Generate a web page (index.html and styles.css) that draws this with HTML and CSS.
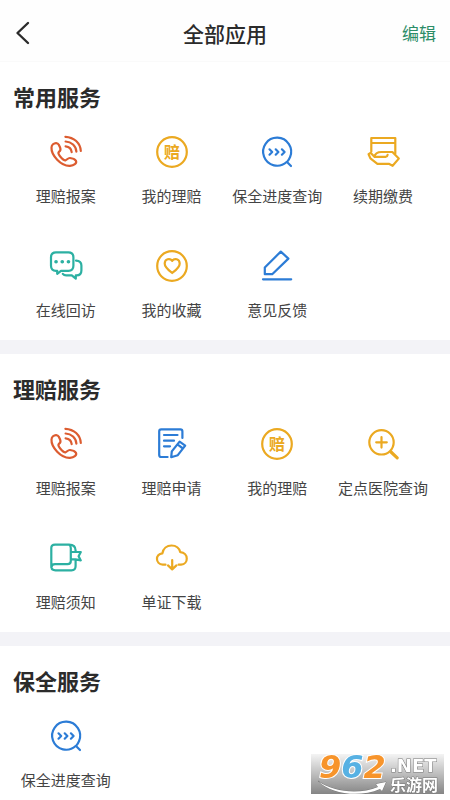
FILE: index.html
```html
<!DOCTYPE html>
<html lang="zh-CN">
<head>
<meta charset="utf-8">
<meta name="viewport" content="width=device-width, initial-scale=1">
<title>全部应用</title>
<link rel="stylesheet" href="styles.css">
</head>
<body>
<svg class="sprite" aria-hidden="true">
  <symbol id="phone" viewBox="0 0 36 36">
    <path d="M5 10.3C7 8.5 9.6 8.6 10.8 10.8L12.2 13.8C13 15.8 12.2 16.9 10.9 17.9C9.8 19 10.6 20.5 12 22.2C14 24.6 15.8 26.6 17.5 26.3C19 26 19.8 23.8 22 24C24 24.2 27 25.3 28 26.8C29 29.2 26 31.4 22 31.8C13 32.3 3 21 3.5 13.5C3.6 12 4 11.2 5 10.3Z"/>
    <path d="M17.4 2.8C26 3.2 32.4 9 32.8 17M17.6 7.5C23.5 7.8 28 12 28.4 17.6M17.6 12.3C21 12.6 23.4 15 23.7 18.2"/>
  </symbol>
  <symbol id="progress" viewBox="0 0 36 36">
    <path d="M27.6 28A14 14 0 1 1 31 23.2Q30 26 28 28L32 32"/>
    <path d="M10.5 15.3L13.2 18L10.5 20.7M16.7 15.3L19.4 18L16.7 20.7M22.9 15.3L25.6 18L22.9 20.7"/>
  </symbol>
  <symbol id="pay" viewBox="0 0 36 36">
    <path d="M6.3 17.5V4H30.3V19.5M6.3 9H30.3"/>
    <path d="M9.4 22.8L5.6 18.8L3.6 20.2L5.4 24.4L12.4 29.8H23.8L27.6 31.8L33.8 24.6L27.4 18H16.5C12.5 18 10 19.5 9.4 22.8H20.5Q22.4 22.6 22.6 20.8"/>
  </symbol>
  <symbol id="chat" viewBox="0 0 36 36">
    <path d="M8 4.3H20.4Q25.4 4.3 25.4 9.3V17.8Q25.4 22.8 20.4 22.8H13L9.2 25.8V22.8H8Q3 22.8 3 17.8V9.3Q3 4.3 8 4.3Z"/>
    <path d="M28 12.6Q33.4 12.8 33.4 17.6V22.4Q33.4 27.2 28.5 27.4H27.8V30.7L23.8 27.4H18.2Q16 27.4 14.8 25.8"/>
    <path class="dots" d="M8 13.7H8.1M14.2 13.7H14.3M20.4 13.7H20.5"/>
  </symbol>
  <symbol id="heart" viewBox="0 0 36 36">
    <circle cx="18" cy="18" r="14.8"/>
    <path d="M18.2 12.8C16 9.8 10.8 10.7 10.7 15.5C10.6 19.4 15 22.5 18.2 25C21.4 22.5 25.8 19.4 25.7 15.5C25.6 10.7 20.4 9.8 18.2 12.8Z"/>
  </symbol>
  <symbol id="pen" viewBox="0 0 36 36">
    <path d="M21.8 3.6L29.4 10.6L13.2 26.2H5.8V19.5ZM4 31.3H32.2"/>
  </symbol>
  <symbol id="form" viewBox="0 0 36 36">
    <path d="M13.6 31H7.2Q5.2 31 5.2 29V5.4Q5.2 3.4 7.2 3.4H26.4Q28.4 3.4 28.4 5.4V12M10 9H23.5M10 14.7H20M10 20.3H16"/>
    <path d="M25.6 15.6L31.2 19.6L23.8 29.2L17.2 31.2L17.8 25.4ZM23.5 18.4L28.9 22.5"/>
  </symbol>
  <symbol id="hospital" viewBox="0 0 36 36">
    <circle cx="16.5" cy="16.3" r="12.2"/>
    <path d="M16.5 11V21.6M11.2 16.3H21.8"/>
    <path class="handle" d="M26 26L32.2 31.8"/>
  </symbol>
  <symbol id="book" viewBox="0 0 36 36">
    <path d="M7 4.6H21Q27.6 4.6 27.6 10.5V12M27.6 19.5V26Q27.6 30.3 23.5 30.3H7.5Q3.3 30.3 3.3 26.5V8Q3.3 4.6 7 4.6M3.3 27.5Q3.8 24.2 7 24.2H19.5Q22.8 24.2 22.8 21V8Q22.8 5.6 21 4.6M22.8 12H32.8L30.6 16.2L32.8 20.4L27.6 19.4H22.8"/>
  </symbol>
  <symbol id="cloud" viewBox="0 0 36 36">
    <path d="M11.5 24.7H8.8C1.2 24.2 1 14 8.4 13.3C9.2 8.3 13 5.5 17.5 5.5C22 5.5 25.2 8 26.3 12.2C34.8 12.8 34.8 24 27 24.7H24.6M18.2 20V29.2M14 25.4L18.2 29.4L22.4 25.4"/>
  </symbol>
</svg>

<header class="topbar">
  <button class="back" type="button" aria-label="返回">
    <svg viewBox="0 0 24 24"><path d="M14 2L3.5 12L14 22"/></svg>
  </button>
  <h1 class="page-title">全部应用</h1>
  <button class="edit" type="button">编辑</button>
</header>

<main>
  <section class="group">
    <h2 class="group-title">常用服务</h2>
    <nav class="grid">
      <a class="app red" href="#"><svg class="icon"><use href="#phone"/></svg><span>理赔报案</span></a>
      <a class="app amber" href="#"><svg class="icon" viewBox="0 0 36 36"><circle cx="18" cy="18" r="14.8"/><text class="coin-char" x="18" y="24" text-anchor="middle">赔</text></svg><span>我的理赔</span></a>
      <a class="app blue" href="#"><svg class="icon"><use href="#progress"/></svg><span>保全进度查询</span></a>
      <a class="app amber" href="#"><svg class="icon"><use href="#pay"/></svg><span>续期缴费</span></a>
      <a class="app teal" href="#"><svg class="icon"><use href="#chat"/></svg><span>在线回访</span></a>
      <a class="app amber" href="#"><svg class="icon"><use href="#heart"/></svg><span>我的收藏</span></a>
      <a class="app blue" href="#"><svg class="icon"><use href="#pen"/></svg><span>意见反馈</span></a>
    </nav>
  </section>
  <section class="group">
    <h2 class="group-title">理赔服务</h2>
    <nav class="grid">
      <a class="app red" href="#"><svg class="icon"><use href="#phone"/></svg><span>理赔报案</span></a>
      <a class="app blue" href="#"><svg class="icon"><use href="#form"/></svg><span>理赔申请</span></a>
      <a class="app amber" href="#"><svg class="icon" viewBox="0 0 36 36"><circle cx="18" cy="18" r="14.8"/><text class="coin-char" x="18" y="24" text-anchor="middle">赔</text></svg><span>我的理赔</span></a>
      <a class="app amber" href="#"><svg class="icon"><use href="#hospital"/></svg><span>定点医院查询</span></a>
      <a class="app teal" href="#"><svg class="icon"><use href="#book"/></svg><span>理赔须知</span></a>
      <a class="app amber" href="#"><svg class="icon"><use href="#cloud"/></svg><span>单证下载</span></a>
    </nav>
  </section>
  <section class="group">
    <h2 class="group-title">保全服务</h2>
    <nav class="grid">
      <a class="app blue" href="#"><svg class="icon"><use href="#progress"/></svg><span>保全进度查询</span></a>
    </nav>
  </section>
</main>

<aside class="watermark">
  <svg class="swoosh" viewBox="0 0 133 40" aria-hidden="true">
    <path d="M7 27C22 38 48 41 67 33L65 30L75 28L71 37L69 35C48 44 20 40 7 27Z"/>
  </svg>
  <div class="digits"><span class="orange">9</span><span class="sky">6</span><span class="orange">2</span></div>
  <div class="site">
    <span class="net">.NET</span>
    <span class="name">乐游网</span>
  </div>
</aside>
</body>
</html>
```
FILE: styles.css
```css
* {
  box-sizing: border-box;
}

body {
  margin: 0;
  background: #fff;
  color: #2b2b2b;
  font-family: "Noto Sans CJK SC", sans-serif;
}

.sprite {
  position: absolute;
  width: 0;
  height: 0;
}

.topbar {
  display: grid;
  grid-template-columns: 1fr auto 1fr;
  align-items: center;
  height: 62px;
  padding: 4px 14px 0;
  background: #fefefe;
  border-bottom: 1px solid #fafafa;
}

button {
  padding: 0;
  border: 0;
  background: none;
  font: inherit;
  cursor: pointer;
}

.back {
  justify-self: start;
  width: 24px;
  height: 24px;
}

.back svg {
  display: block;
  fill: none;
  stroke: #2b2b2b;
  stroke-width: 2.4;
  stroke-linecap: round;
  stroke-linejoin: round;
}

.page-title {
  margin: 0;
  font-size: 21px;
  line-height: 32px;
  font-weight: 500;
}

.edit {
  justify-self: end;
  color: #2c8d68;
  font-size: 17px;
  line-height: 24px;
}

.group {
  padding: 18px 14px 20px 13px;
}

.group + .group {
  border-top: 14px solid #f3f3f7;
}

.group:last-child {
  padding-bottom: 0;
}

.group-title {
  margin: 0 0 22px;
  font-size: 22px;
  line-height: 32px;
  font-weight: 700;
}

.grid {
  display: grid;
  grid-template-columns: repeat(4, 1fr);
  row-gap: 42px;
}

.app {
  display: flex;
  flex-direction: column;
  align-items: center;
  gap: 16px;
  text-decoration: none;
  white-space: nowrap;
}

.app span {
  color: #444;
  font-size: 15px;
  line-height: 20px;
}

.icon {
  width: 36px;
  height: 36px;
  fill: none;
  stroke: currentColor;
  stroke-width: 2.2;
  stroke-linecap: round;
  stroke-linejoin: round;
}

.coin-char {
  fill: currentColor;
  stroke: none;
  font-size: 16px;
  font-weight: 700;
}

.dots {
  stroke-width: 3.6;
}

.handle {
  stroke-width: 3.2;
}

.red { color: #dc5c30; }
.amber { color: #eba921; }
.blue { color: #2c7cd6; }
.teal { color: #2cb0a2; }

.watermark {
  position: fixed;
  right: 6px;
  bottom: 6px;
  display: flex;
  justify-content: space-between;
  width: 133px;
  height: 40px;
  padding: 0 6px 0 8px;
  background: linear-gradient(#f4f4f4, #b8b8b8 55%, #858585);
  color: #fff;
  font-weight: 700;
  white-space: nowrap;
}

.swoosh {
  position: absolute;
  inset: 0;
  fill: #fff;
  stroke: #777;
  stroke-width: 1;
  paint-order: stroke;
}

.digits {
  position: relative;
  font-family: "DejaVu Sans", sans-serif;
  font-size: 32px;
  line-height: 26px;
  font-style: italic;
  -webkit-text-stroke: 2px #fff;
  paint-order: stroke;
}

.orange { color: #f7942b; }
.sky { color: #57b1e3; }

.site {
  position: relative;
  display: flex;
  flex-direction: column;
  padding-top: 4px;
  -webkit-text-stroke: 1px #777;
  paint-order: stroke;
}

.net {
  font-family: "DejaVu Sans", sans-serif;
  font-size: 18px;
  line-height: 16px;
}

.name {
  font-size: 16px;
  line-height: 20px;
}
```
